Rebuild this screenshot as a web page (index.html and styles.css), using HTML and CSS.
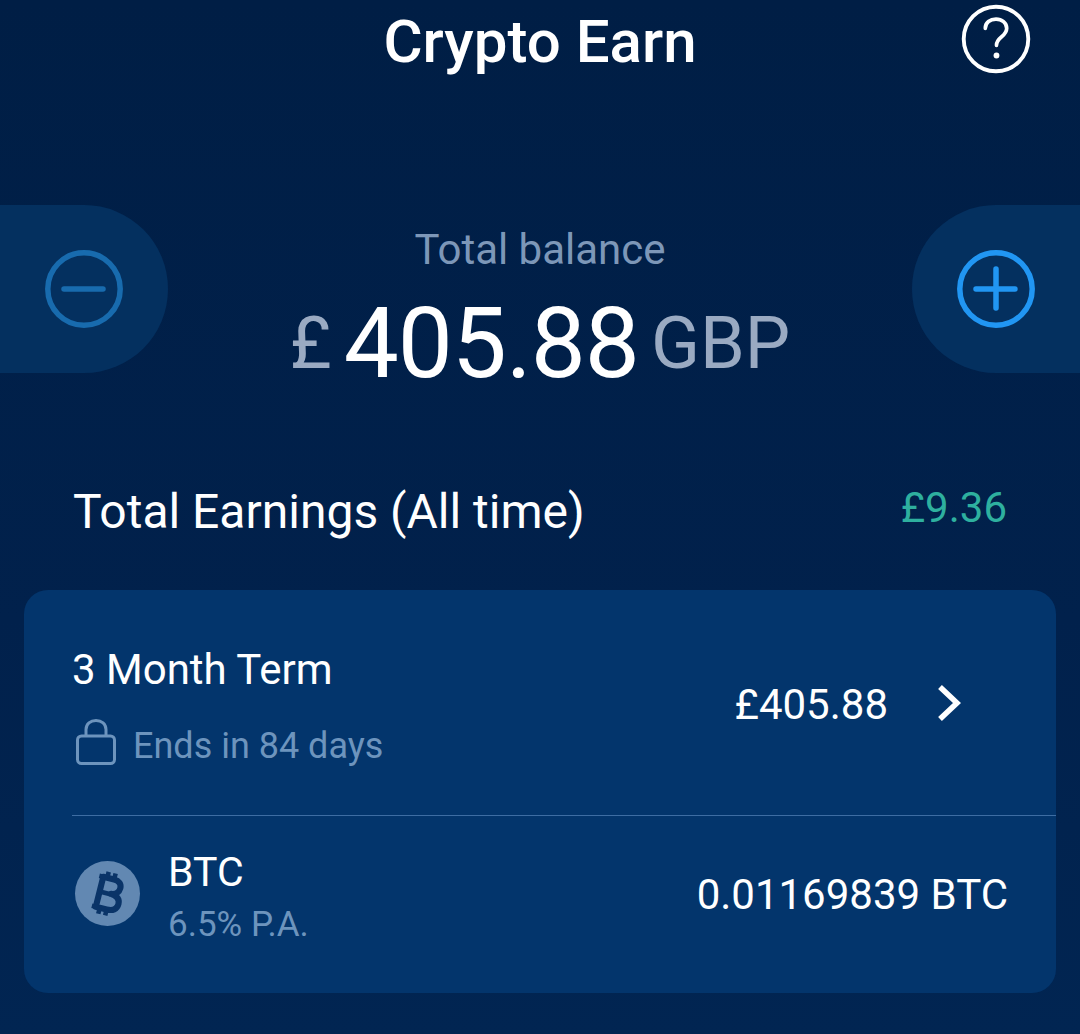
FILE: index.html
```html
<!DOCTYPE html>
<html lang="en">
<head>
    <meta charset="UTF-8">
    <title>Crypto Earn</title>
    <link rel="stylesheet" href="styles.css">
</head>
<body>
    <div class="screen">
        <header class="topbar">
            <h1>Crypto Earn</h1>
            <svg class="help" viewBox="0 0 72 72" fill="none" stroke="#fff">
                <circle cx="36" cy="36" r="33.2" stroke-width="4"/>
                <path d="M25 25c0-6 5-9.500 11-9.500S47 19.500 47 25c0 4.500-3 7-5.500 9-3 2.500-5 4.500-5 8.500" stroke-width="3.800" stroke-linecap="round"/>
                <circle cx="36.500" cy="53" r="3" fill="#fff" stroke="none"/>
            </svg>
        </header>

        <section class="balance">
            <div class="side side-left">
                <svg class="side-icon" viewBox="0 0 78 78" fill="none" stroke="#186bae" stroke-width="5.500" stroke-linecap="round">
                    <circle cx="39" cy="39" r="36.200"/>
                    <path d="M19 39h39"/>
                </svg>
            </div>
            <div class="balance-main">
                <div class="balance-label">Total balance</div>
                <div class="balance-value">
                    <span class="currency">£</span>
                    <span class="amount">405.88</span>
                    <span class="code">GBP</span>
                </div>
            </div>
            <div class="side side-right">
                <svg class="side-icon" viewBox="0 0 78 78" fill="none" stroke="#2196f3" stroke-width="5.500" stroke-linecap="round">
                    <circle cx="39" cy="39" r="36.200"/>
                    <path d="M19 39h39M39 19v39"/>
                </svg>
            </div>
        </section>

        <div class="earnings">
            <span class="earnings-label">Total Earnings (All time)</span>
            <span class="earnings-value">£9.36</span>
        </div>

        <section class="card">
            <div class="term">
                <div class="term-left">
                    <div class="term-name">3 Month Term</div>
                    <div class="term-ends">
                        <svg class="lock" viewBox="0 0 40 46" fill="none" stroke="#6d94bd" stroke-width="3">
                            <rect x="1.500" y="17" width="37" height="27.500" rx="4"/>
                            <path d="M10 17v-6.500C10 5 14.500 1.500 20 1.500S30 5 30 10.500V17"/>
                        </svg>
                        <span>Ends in 84 days</span>
                    </div>
                </div>
                <div class="term-right">
                    <span class="term-amount">£405.88</span>
                    <svg class="chevron" viewBox="0 0 24 36" fill="none" stroke="#fff" stroke-width="5.500">
                        <path d="M3 2l17 16L3 34"/>
                    </svg>
                </div>
            </div>
            <div class="coin-row">
                <div class="coin-left">
                    <div class="coin-icon">
                        <svg viewBox="0 0 64 64">
                            <g transform="rotate(14 32 32)" fill="none" stroke="#0a3468">
                                <path d="M24 17h11c5 0 8 2.500 8 7 0 4-3 7-7.500 7.500C41 32 45 34.500 45 39.500 45 45 41 47.500 35 47.500H24z" stroke-width="6" stroke-linejoin="round"/>
                                <path d="M20 17h8M20 47.500h8M28 11v6M35 11v6M28 47.500v6M35 47.500v6M26 32h9" stroke-width="4.500"/>
                            </g>
                        </svg>
                    </div>
                    <div class="coin-text">
                        <div class="coin-name">BTC</div>
                        <div class="coin-rate">6.5% P.A.</div>
                    </div>
                </div>
                <div class="coin-amount">0.01169839 BTC</div>
            </div>
        </section>
    </div>
</body>
</html>
```

FILE: styles.css
```css
* {
    margin: 0;
    padding: 0;
    box-sizing: border-box;
}

body {
    background: #01214c;
    color: #fff;
    font-family: Roboto, "Noto Sans", sans-serif;
}

.screen {
    height: 1034px;
    overflow: hidden;
    background: linear-gradient(180deg, #001e45 0%, #01214c 60%, #012552 100%);
}

/* Top bar */
.topbar {
    position: relative;
    height: 86px;
    text-align: center;
}

.topbar h1 {
    font-size: 60px;
    font-weight: 500;
    line-height: 84px;
}

.help {
    position: absolute;
    top: 4px;
    right: 49px;
    width: 70px;
    height: 70px;
}

/* Balance */
.balance {
    display: grid;
    grid-template-columns: 168px 1fr 168px;
    grid-template-rows: 168px;
    margin-top: 119px;
}

.side {
    display: flex;
    align-items: center;
    background: #04305f;
}

.side-left {
    justify-content: flex-end;
    padding-right: 45px;
    border-radius: 0 84px 84px 0;
}

.side-right {
    padding-left: 45px;
    border-radius: 84px 0 0 84px;
}

.side-icon {
    width: 78px;
    height: 78px;
}

.balance-main {
    text-align: center;
}

.balance-label {
    padding-top: 20px;
    color: #7d97b8;
    font-size: 42px;
    line-height: 50px;
}

.balance-value {
    display: flex;
    justify-content: center;
    align-items: center;
    gap: 12px;
    margin-top: 20px;
    line-height: 98px;
}

.currency {
    color: #9aaac2;
    font-size: 72px;
}

.amount {
    font-size: 98px;
    letter-spacing: -1px;
}

.code {
    color: #9aaac2;
    font-size: 72px;
}

/* Earnings */
.earnings {
    display: flex;
    justify-content: space-between;
    align-items: center;
    height: 70px;
    margin-top: 103px;
    padding: 0 73px;
}

.earnings-label {
    font-size: 48px;
}

.earnings-value {
    color: #2eb09f;
    font-size: 42px;
    margin-top: -8px;
}

/* Card */
.card {
    height: 403px;
    margin: 44px 24px 0;
    padding-left: 48px;
    background: #03356c;
    border-radius: 24px;
}

.term {
    display: flex;
    justify-content: space-between;
    align-items: center;
    height: 226px;
    padding-right: 95px;
    border-bottom: 1px solid #3e6da3;
}

.term-left {
    padding-top: 7px;
}

.term-name {
    font-size: 42px;
    line-height: 48px;
}

.term-ends {
    display: flex;
    align-items: center;
    gap: 17px;
    margin-top: 31px;
    padding-left: 4px;
    color: #6d94bd;
    font-size: 36px;
}

.lock {
    width: 40px;
    height: 46px;
    margin-top: -8px;
}

.term-right {
    display: flex;
    align-items: center;
    gap: 49px;
}

.term-amount {
    font-size: 42px;
    line-height: 48px;
    padding-top: 4px;
}

.chevron {
    width: 24px;
    height: 36px;
}

.coin-row {
    display: flex;
    justify-content: space-between;
    align-items: center;
    height: 156px;
    padding-right: 48px;
}

.coin-left {
    display: flex;
    align-items: center;
    gap: 28px;
    padding-left: 3px;
}

.coin-icon {
    width: 65px;
    height: 65px;
    margin-bottom: 2px;
    border-radius: 50%;
    background: #6288b2;
}

.coin-icon svg {
    display: block;
    width: 65px;
    height: 65px;
}

.coin-text {
    padding-top: 6px;
}

.coin-name {
    font-size: 41px;
    line-height: 46px;
}

.coin-rate {
    margin-top: 9px;
    color: #6d94bd;
    font-size: 35px;
}

.coin-amount {
    font-size: 42px;
}
```
